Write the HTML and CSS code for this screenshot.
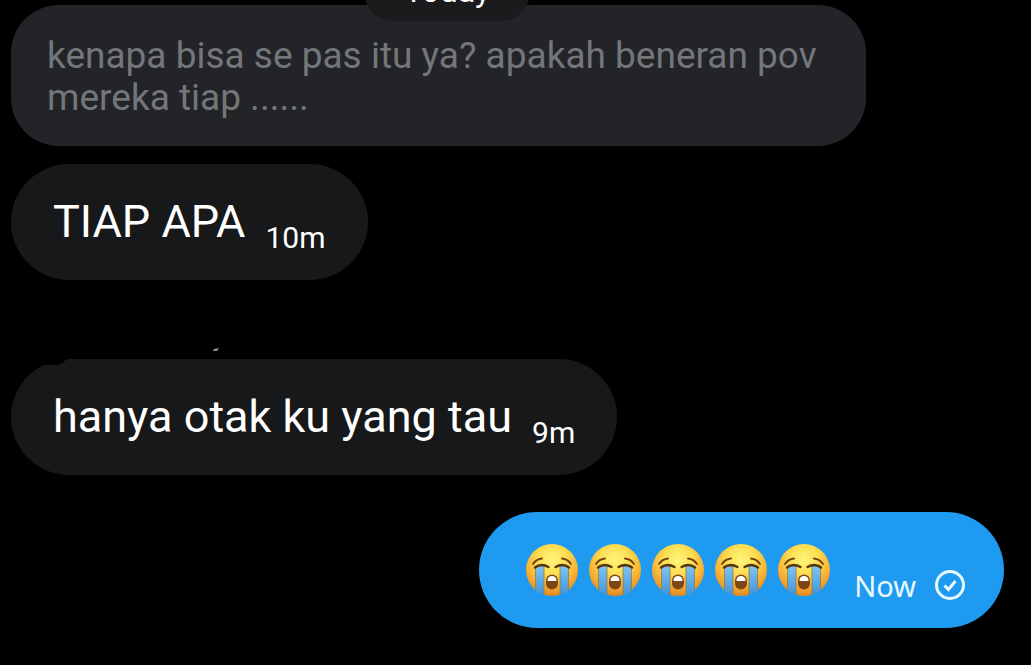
FILE: index.html
```html
<!DOCTYPE html>
<html lang="id">
<head>
    <meta charset="UTF-8">
    <meta name="viewport" content="width=device-width, initial-scale=1.0">
    <title>Messages</title>
    <link rel="stylesheet" href="styles.css">
</head>
<body>
    <!-- shared emoji and icon shapes -->
    <svg class="shapes" aria-hidden="true">
        <defs>
            <radialGradient id="face" cx="50%" cy="30%" r="72%">
                <stop offset="0" stop-color="#fff67a"/>
                <stop offset="0.4" stop-color="#fddc50"/>
                <stop offset="0.75" stop-color="#f6a92f"/>
                <stop offset="1" stop-color="#dd8420"/>
            </radialGradient>
            <linearGradient id="tear" x1="0" y1="0" x2="0" y2="1">
                <stop offset="0" stop-color="#7fc4f2"/>
                <stop offset="1" stop-color="#3d93dc"/>
            </linearGradient>
            <clipPath id="round"><circle cx="26" cy="26" r="26"/></clipPath>
        </defs>
        <symbol id="sob" viewBox="0 0 52 52">
            <circle cx="26" cy="26" r="26" fill="url(#face)"/>
            <g clip-path="url(#round)">
                <path d="M9.5 22h8.500v30h-8.500z" fill="url(#tear)" stroke="#8b7d48" stroke-width="0.8"/>
                <path d="M34 22h8.500v30h-8.500z" fill="url(#tear)" stroke="#8b7d48" stroke-width="0.8"/>
            </g>
            <path d="M7 20c2-3 5-5 9-5.500M45 20c-2-3-5-5-9-5.500" fill="none" stroke="#71420d" stroke-width="1.8" stroke-linecap="round"/>
            <path d="M9 23.500c4-3 9-3 13.500-0.500M29.500 23c4.500-2.500 9.500-2.500 13.500 0.500" fill="none" stroke="#55350f" stroke-width="2.4" stroke-linecap="round"/>
            <rect x="20" y="30.500" width="12" height="15" rx="6" fill="#7c4513"/>
            <path d="M21.500 36c0-5.500 9-5.500 9 0v1h-9z" fill="#fff"/>
        </symbol>
    </svg>

    <main class="chat">
        <div class="date">Today</div>

        <blockquote class="quote">kenapa bisa se pas itu ya? apakah beneran pov mereka tiap ......</blockquote>

        <div class="message">
            <span class="text">TIAP APA</span>
            <time class="time">10m</time>
        </div>

        <div class="message reply">
            <span class="text">hanya otak ku yang tau</span>
            <time class="time">9m</time>
            <svg class="sender" viewBox="0 0 240 28" aria-hidden="true">
                <path d="M22 6h36v7c-4 1-6 7-14 7H32c-5 0-8-4-10-14z" fill="#000"/>
                <path d="M202 6l1-2 5-1-2 3z" fill="#8a8d91"/>
            </svg>
        </div>

        <div class="message sent">
            <span class="emojis" role="img" aria-label="😭😭😭😭😭">
                <svg class="emoji"><use href="#sob"/></svg>
                <svg class="emoji"><use href="#sob"/></svg>
                <svg class="emoji"><use href="#sob"/></svg>
                <svg class="emoji"><use href="#sob"/></svg>
                <svg class="emoji"><use href="#sob"/></svg>
            </span>
            <time class="time">Now</time>
            <svg class="check" viewBox="0 0 32 32" aria-hidden="true">
                <circle cx="16" cy="16" r="13.500" fill="none" stroke="#e8f9ff" stroke-width="3"/>
                <path d="M10.500 16.500l4 4 7-8.500" fill="none" stroke="#e8f9ff" stroke-width="3"/>
            </svg>
        </div>
    </main>
</body>
</html>
```
FILE: styles.css
```css
* {
    box-sizing: border-box;
}

body {
    margin: 0;
    background-color: #000;
    color: #fff;
    font-family: Roboto, "Noto Sans", sans-serif;
}

.shapes {
    position: absolute;
    width: 0;
    height: 0;
}

.chat {
    position: relative;
    display: flex;
    flex-direction: column;
    align-items: flex-start;
    padding: 5px 27px 36px 11px;
}

/* floating date, scrolled partly out of view */
.date {
    position: absolute;
    top: -37px;
    left: 364px;
    padding: 10px 40px 12px;
    border-radius: 29px;
    background-color: #1b1b1d;
    font-size: 32px;
    line-height: 36px;
}

.quote {
    max-width: 855px;
    margin: 0 0 18px;
    padding: 30px 36px 27px;
    border-radius: 48px;
    background-color: #232427;
    color: #73767b;
    font-size: 37px;
    line-height: 42px;
}

.message {
    position: relative;
    display: flex;
    align-items: center;
    height: 116px;
    padding: 0 42px;
    border-radius: 58px;
    background-color: #16181a;
}

.text {
    font-size: 45px;
    line-height: 52px;
}

.time {
    margin-left: 20px;
    padding-top: 32px;
    font-size: 30px;
    line-height: 36px;
}

.reply {
    margin-top: 79px;
}

.sender {
    position: absolute;
    top: -14px;
    left: 0;
    width: 240px;
    height: 28px;
}

.sent {
    align-self: flex-end;
    margin-top: 37px;
    padding: 0 38px 0 47px;
    background-color: #1e9bf0;
}

.emojis {
    display: flex;
    gap: 11px;
}

.emoji {
    width: 52px;
    height: 52px;
}

.sent .time {
    margin-left: 24px;
    color: #e8f9ff;
    font-family: "Noto Sans", sans-serif;
    font-size: 29px;
}

.check {
    width: 32px;
    height: 32px;
    margin: 30px 0 0 18px;
}
```
